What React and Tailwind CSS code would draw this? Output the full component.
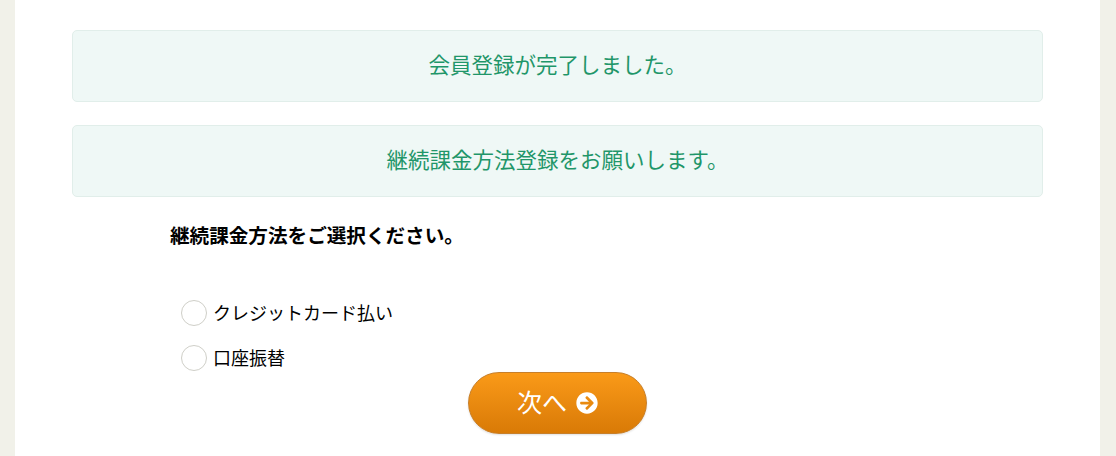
import { FaArrowCircleRight } from "react-icons/fa";

const fontStack = "font-['Noto_Sans_CJK_JP','Noto_Sans',sans-serif]";

function Notice({ children }) {
  return (
    <div className="flex h-[71.5px] items-center justify-center rounded-[5px] border border-[#e1eeea] bg-[#eff8f6] pb-[4px] text-[21.5px] text-[#1f9669]">
      {children}
    </div>
  );
}

function RadioRow({ label }) {
  return (
    <label className="flex h-[26px] items-center">
      <span className="h-[26px] w-[25.5px] rounded-full border border-[#cfcfc8] bg-white"></span>
      <span className="ml-[6.5px] -translate-y-[1.5px] text-[18px] text-black">{label}</span>
    </label>
  );
}

export default function App() {
  return (
    <div className={`h-[456px] overflow-hidden bg-[#f1f1e9] pl-[15px] ${fontStack}`}>
      <div className="h-full w-[1085px] bg-white px-[57px] pt-[30px]">
        <div className="flex flex-col gap-[23.5px]">
          <Notice>会員登録が完了しました。</Notice>
          <Notice>継続課金方法登録をお願いします。</Notice>
        </div>

        <p className="ml-[98px] mt-[24.5px] text-[19.6px] leading-[28px] font-bold text-black">
          継続課金方法をご選択ください。
        </p>

        <div className="ml-[109px] mt-[51px] flex flex-col gap-[19px]">
          <RadioRow label="クレジットカード払い" />
          <RadioRow label="口座振替" />
        </div>

        <div className="flex justify-center">
          <button className="mt-[1px] flex h-[62px] w-[179px] items-center justify-center gap-[9px] rounded-[31px] border border-[#c77f2a] bg-gradient-to-b from-[#fa9a18] to-[#d97a06] pb-[3px] text-[25px] text-white shadow-[0_1px_2px_rgba(0,0,0,0.12)]">
            次へ
            <FaArrowCircleRight className="mt-[3px] h-[22px] w-[22px] text-white" />
          </button>
        </div>
      </div>
    </div>
  );
}
